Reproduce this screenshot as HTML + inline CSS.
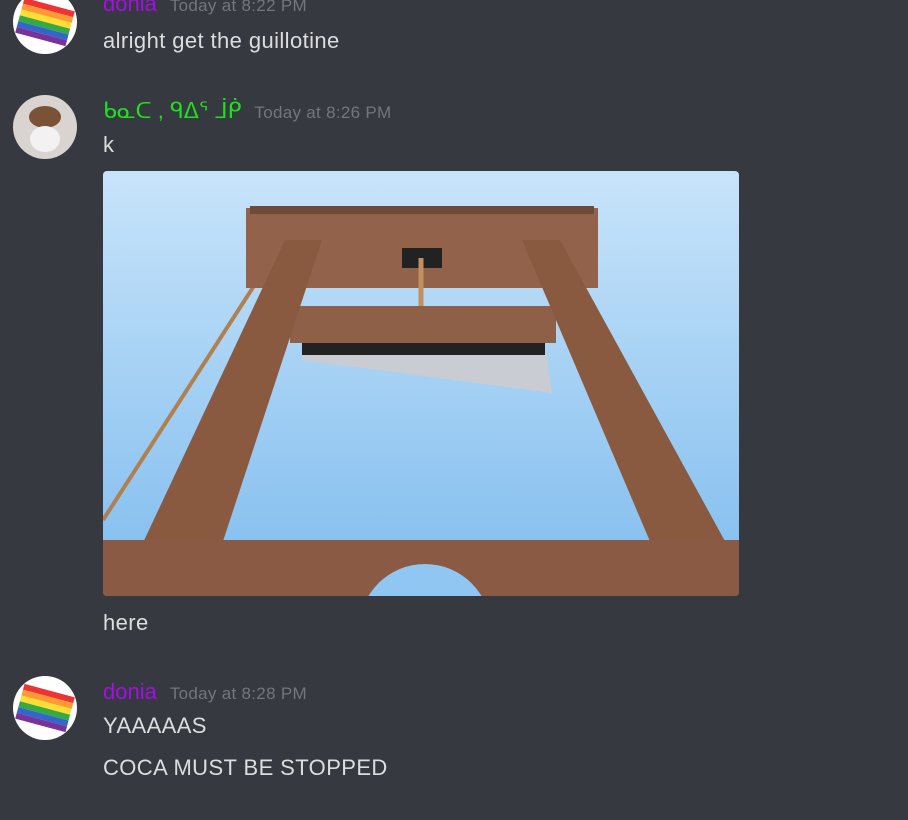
<!DOCTYPE html>
<html><head><meta charset="utf-8"><style>
body{margin:0;width:908px;height:820px;background:#36393f;overflow:hidden;position:relative;font-family:"Liberation Sans","Noto Sans CJK SC",sans-serif}
.a{position:absolute;left:13px;width:64px;height:64px;border-radius:50%;background:#fff;overflow:hidden}
.t{position:absolute;left:103px;color:#dcddde;font-size:22px;letter-spacing:0.4px;white-space:nowrap}
.n{position:absolute;left:103px;font-size:22px;white-space:nowrap}
.n span{color:#72767d;font-size:17px;margin-left:13px;letter-spacing:0.3px}
</style></head><body>
<div class="a" style="top:-10px"><svg width="64" height="64"><g transform="rotate(15 32 32)"><rect x="6" y="14" width="52" height="6" fill="#e33"/><rect x="6" y="20" width="52" height="6" fill="#f93"/><rect x="6" y="26" width="52" height="6" fill="#fd3"/><rect x="6" y="32" width="52" height="6" fill="#3a4"/><rect x="6" y="38" width="52" height="6" fill="#36c"/><rect x="6" y="44" width="52" height="6" fill="#739"/></g></svg></div>
<div class="n" style="top:-9px;color:#a50ee6">donia<span>Today at 8:22 PM</span></div>
<div class="t" style="top:28px">alright get the guillotine</div>

<div class="a" style="top:95px;background:#d9d4cf"><svg width="64" height="64"><ellipse cx="32" cy="22" rx="16" ry="11" fill="#7a5236"/><ellipse cx="32" cy="44" rx="15" ry="13" fill="#f2f2f2"/></svg></div>
<div class="n" style="top:98px;color:#1fe01f">ᑲᓇᑕ , ᑫᐃᕐ ᒨᑮ<span>Today at 8:26 PM</span></div>
<div class="t" style="top:132px">k</div>

<svg style="position:absolute;left:103px;top:171px;border-radius:4px" width="636" height="425" viewBox="103 171 636 425">
<defs><linearGradient id="s" x1="0" y1="0" x2="0" y2="1"><stop offset="0" stop-color="#c8e4fa"/><stop offset="1" stop-color="#7fbcee"/></linearGradient></defs>
<rect x="103" y="171" width="636" height="425" fill="url(#s)"/>
<line x1="272" y1="258" x2="103" y2="520" stroke="#b08050" stroke-width="4"/>
<rect x="246" y="208" width="352" height="80" fill="#93624a"/>
<rect x="250" y="206" width="344" height="8" fill="#6e4a38"/>
<rect x="402" y="248" width="40" height="20" fill="#222"/>
<line x1="421" y1="258" x2="421" y2="306" stroke="#c09060" stroke-width="5"/>
<rect x="290" y="306" width="266" height="37" fill="#8f6048"/>
<polygon points="302,345 545,345 552,393 302,360" fill="#c9ccd2"/>
<rect x="302" y="343" width="243" height="12" fill="#222"/>
<polygon points="285,240 322,240 205,596 118,596" fill="#8a5a40"/>
<polygon points="522,240 560,240 738,565 660,565" fill="#8a5a40"/>
<rect x="103" y="540" width="636" height="56" fill="#8a5a44"/>
<circle cx="425" cy="630" r="66" fill="#8fc6f2"/>
</svg>

<div class="t" style="top:610px">here</div>

<div class="a" style="top:676px"><svg width="64" height="64"><g transform="rotate(15 32 32)"><rect x="6" y="14" width="52" height="6" fill="#e33"/><rect x="6" y="20" width="52" height="6" fill="#f93"/><rect x="6" y="26" width="52" height="6" fill="#fd3"/><rect x="6" y="32" width="52" height="6" fill="#3a4"/><rect x="6" y="38" width="52" height="6" fill="#36c"/><rect x="6" y="44" width="52" height="6" fill="#739"/></g></svg></div>
<div class="n" style="top:679px;color:#a50ee6">donia<span>Today at 8:28 PM</span></div>
<div class="t" style="top:713px">YAAAAAS</div>
<div class="t" style="top:755px">COCA MUST BE STOPPED</div>
</body></html>
